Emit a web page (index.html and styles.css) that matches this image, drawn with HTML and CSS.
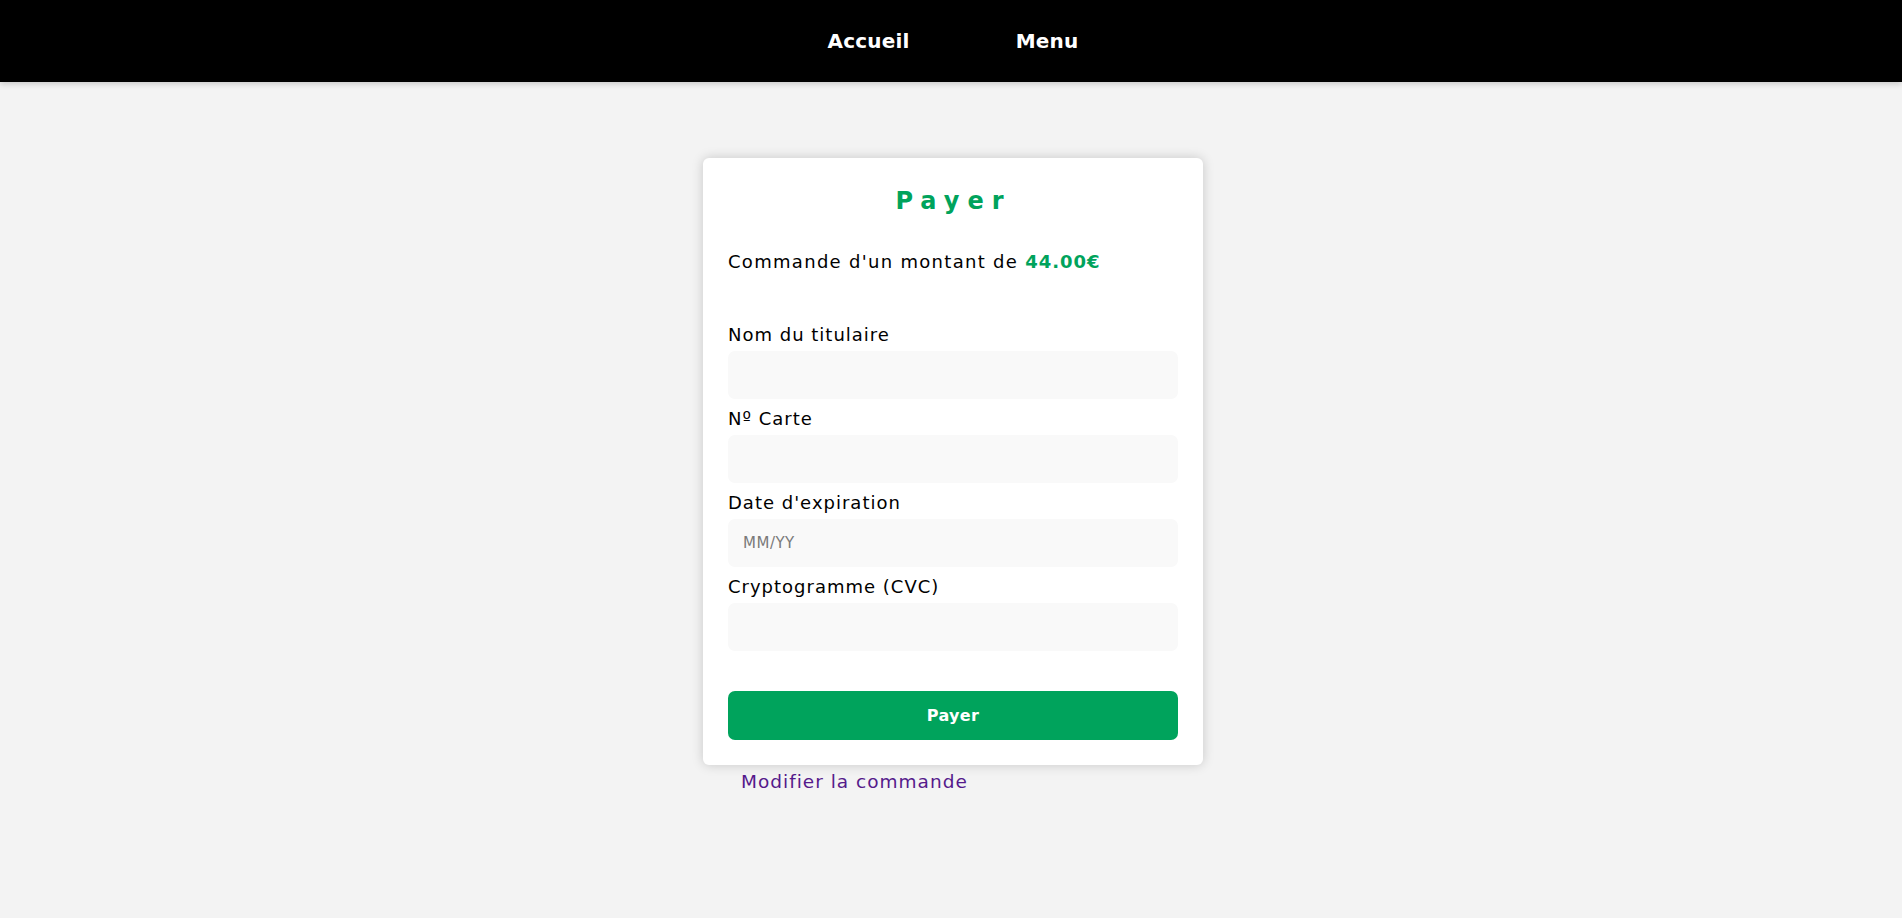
FILE: index.html
```html
<!DOCTYPE html>
<html lang="fr">
<head>
<meta charset="utf-8">
<title>Payer</title>
<link rel="stylesheet" href="styles.css">
</head>
<body>
<header class="topbar">
  <nav class="nav">
    <a class="nav-link" href="#">Accueil</a>
    <a class="nav-link" href="#">Menu</a>
  </nav>
</header>
<main class="page">
  <div class="pay-wrap">
    <form class="card">
      <h2 class="card-title">Payer</h2>
      <p class="amount">Commande d'un montant de <strong class="price">44.00€</strong></p>
      <div class="fields">
        <div class="field">
          <label class="label">Nom du titulaire</label>
          <input class="input" type="text">
        </div>
        <div class="field">
          <label class="label">Nº Carte</label>
          <input class="input" type="text">
        </div>
        <div class="field">
          <label class="label">Date d'expiration</label>
          <input class="input" type="text" placeholder="MM/YY">
        </div>
        <div class="field">
          <label class="label">Cryptogramme (CVC)</label>
          <input class="input" type="text">
        </div>
      </div>
      <button class="btn" type="button">Payer</button>
    </form>
    <a class="back-link" href="#">Modifier la commande</a>
  </div>
</main>
</body>
</html>
```
FILE: styles.css
```css
* { box-sizing: border-box; }

html, body {
  margin: 0;
  padding: 0;
}

body {
  min-height: 100vh;
  background: #f3f3f3;
  font-family: "DejaVu Sans", "Liberation Sans", sans-serif;
  color: #000;
}

.topbar {
  height: 82px;
  background: #000;
  box-shadow: 0 2px 6px rgba(0, 0, 0, 0.18);
  display: flex;
  align-items: center;
  justify-content: center;
  padding-left: 4px;
}

.nav {
  display: flex;
  gap: 106px;
}

.nav-link {
  color: #fff;
  text-decoration: none;
  font-weight: bold;
  font-size: 20px;
  line-height: 28px;
  letter-spacing: 0.2px;
}

.page {
  display: flex;
  justify-content: center;
  padding: 76px 0 40px 4px;
}

.pay-wrap {
  width: 500px;
  display: flex;
  flex-direction: column;
}

.card {
  background: #fff;
  border-radius: 6px;
  box-shadow: 0 0 12px rgba(0, 0, 0, 0.18);
  padding: 25px;
  display: flex;
  flex-direction: column;
}

.card-title {
  margin: 2px 0 0;
  text-align: center;
  color: #00a35c;
  font-size: 24px;
  line-height: 32px;
  font-weight: bold;
  letter-spacing: 8px;
  padding-left: 1px;
}

.amount {
  margin: 30.6px 0 0;
  font-size: 18px;
  line-height: 27px;
  letter-spacing: 1.3px;
}

.price {
  color: #00a35c;
  font-weight: bold;
  letter-spacing: 1px;
}

.fields {
  margin-top: 46.7px;
  display: flex;
  flex-direction: column;
  gap: 6px;
}

.field {
  display: flex;
  flex-direction: column;
  gap: 3px;
}

.label {
  font-size: 18px;
  line-height: 27px;
  letter-spacing: 1px;
}

.input {
  height: 48px;
  border: none;
  border-radius: 7px;
  background: #f9f9f9;
  padding: 0 15px;
  font-family: "DejaVu Sans", "Liberation Sans", sans-serif;
  font-size: 15px;
  letter-spacing: 0.5px;
  outline: none;
}

.input::placeholder {
  color: #7a7a7a;
}

.btn {
  margin-top: 40px;
  height: 49px;
  border: none;
  border-radius: 7px;
  background: #00a35c;
  color: #fff;
  font-family: "DejaVu Sans", "Liberation Sans", sans-serif;
  font-weight: bold;
  font-size: 16px;
  letter-spacing: 0.3px;
  cursor: pointer;
}

.back-link {
  margin: 2.4px 0 0 38px;
  color: #551a8b;
  text-decoration: none;
  font-size: 18.5px;
  line-height: 27px;
  letter-spacing: 1px;
  align-self: flex-start;
}
```
